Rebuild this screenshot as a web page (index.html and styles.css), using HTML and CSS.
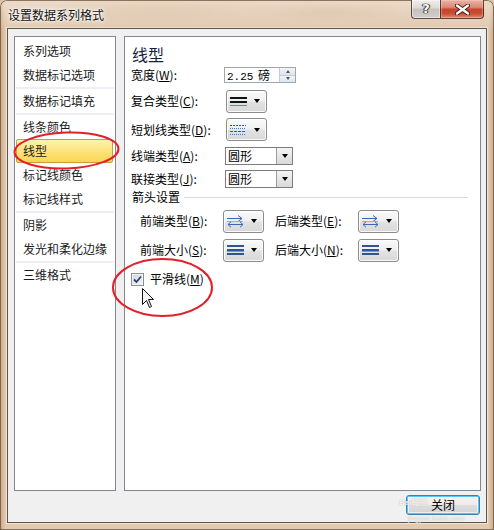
FILE: index.html
```html
<!DOCTYPE html>
<html>
<head>
<meta charset="utf-8">
<title>设置数据系列格式</title>
<link rel="stylesheet" href="styles.css">
</head>
<body>
<div class="window">
  <div class="titlebar">
    <div class="title">设置数据系列格式</div>
    <div class="caps">
      <div class="cap help">?</div>
      <div class="cap close">
        <svg width="15" height="11" viewBox="0 0 15 11"><path d="M2 1.5 L13 9.5 M13 1.5 L2 9.5" stroke="#3a1a14" stroke-width="4.2" stroke-linecap="round"/><path d="M2 1.5 L13 9.5 M13 1.5 L2 9.5" stroke="#ffffff" stroke-width="2.4" stroke-linecap="round"/></svg>
      </div>
    </div>
  </div>
  <div class="client">
    <div class="panels">
      <div class="nav">
        <div class="item">系列选项</div>
        <div class="item">数据标记选项</div>
        <div class="sep"></div>
        <div class="item">数据标记填充</div>
        <div class="sep"></div>
        <div class="item">线条颜色</div>
        <div class="item selected">线型</div>
        <div class="item">标记线颜色</div>
        <div class="item">标记线样式</div>
        <div class="sep"></div>
        <div class="item">阴影</div>
        <div class="item">发光和柔化边缘</div>
        <div class="sep"></div>
        <div class="item">三维格式</div>
      </div>
      <div class="content">
        <div class="heading">线型</div>
        <div class="row r1">
          <div class="lbl">宽度(<u>W</u>):</div>
          <div class="spin">
            <div class="val"><span class="num">2.25</span> 磅</div>
            <div class="arrows">
              <div class="up"><span class="tri-up"></span></div>
              <div class="down"><span class="tri-down"></span></div>
            </div>
          </div>
        </div>
        <div class="row r2">
          <div class="lbl">复合类型(<u>C</u>):</div>
          <div class="ddbtn">
            <svg class="ico" width="17" height="11" viewBox="0 0 17 11"><rect x="0" y="1" width="17" height="2" fill="#111"/><rect x="0" y="5" width="17" height="2" fill="#111"/><rect x="0" y="9" width="17" height="1" fill="#6c8c7c"/></svg>
            <span class="caret"></span>
          </div>
        </div>
        <div class="row r3">
          <div class="lbl">短划线类型(<u>D</u>):</div>
          <div class="ddbtn">
            <svg class="ico" width="17" height="11" viewBox="0 0 17 11"><path d="M0 1.5 H16" stroke="#2b58b0" stroke-width="1" stroke-dasharray="2 1"/><path d="M0 4.5 H16" stroke="#4a74c4" stroke-width="1" stroke-dasharray="1 1"/><path d="M0 7.5 H16" stroke="#2b58b0" stroke-width="1" stroke-dasharray="3 1"/><path d="M0 10.5 H16" stroke="#4a74c4" stroke-width="1" stroke-dasharray="1 1"/></svg>
            <span class="caret"></span>
          </div>
        </div>
        <div class="row r4">
          <div class="lbl">线端类型(<u>A</u>):</div>
          <div class="sel"><div class="txt">圆形</div><div class="sbtn"><span class="caret"></span></div></div>
        </div>
        <div class="row r5">
          <div class="lbl">联接类型(<u>J</u>):</div>
          <div class="sel"><div class="txt">圆形</div><div class="sbtn"><span class="caret"></span></div></div>
        </div>
        <div class="section">
          <div class="sect-lbl">箭头设置</div>
          <div class="line"></div>
        </div>
        <div class="row arow r6">
          <div class="alabel">前端类型(<u>B</u>):</div>
          <div class="ddbtn abtn">
            <svg class="ico" width="17" height="13" viewBox="0 0 17 13"><path d="M0 3.5 H15 M11 0.5 L15 3.5 L11 6.5" stroke="#3868b8" stroke-width="1" fill="none"/><path d="M0 6.5 H16" stroke="#9ab0d0" stroke-width="1"/><path d="M1 9.5 H16 M4 6.8 L1 9.5 L4 12.2 M13 6.8 L16 9.5 L13 12.2" stroke="#3868b8" stroke-width="1" fill="none"/></svg>
            <span class="caret"></span>
          </div>
          <div class="alabel second">后端类型(<u>E</u>):</div>
          <div class="ddbtn abtn">
            <svg class="ico" width="17" height="13" viewBox="0 0 17 13"><path d="M0 3.5 H15 M11 0.5 L15 3.5 L11 6.5" stroke="#3868b8" stroke-width="1" fill="none"/><path d="M0 6.5 H16" stroke="#9ab0d0" stroke-width="1"/><path d="M1 9.5 H16 M4 6.8 L1 9.5 L4 12.2 M13 6.8 L16 9.5 L13 12.2" stroke="#3868b8" stroke-width="1" fill="none"/></svg>
            <span class="caret"></span>
          </div>
        </div>
        <div class="row arow r7">
          <div class="alabel">前端大小(<u>S</u>):</div>
          <div class="ddbtn abtn">
            <svg class="ico" width="17" height="10" viewBox="0 0 17 10"><rect x="0" y="0" width="17" height="2" fill="#2f5597"/><rect x="0" y="4" width="17" height="2.5" fill="#2f5597"/><rect x="0" y="8" width="17" height="2" fill="#2f5597"/></svg>
            <span class="caret"></span>
          </div>
          <div class="alabel second">后端大小(<u>N</u>):</div>
          <div class="ddbtn abtn">
            <svg class="ico" width="17" height="10" viewBox="0 0 17 10"><rect x="0" y="0" width="17" height="2" fill="#2f5597"/><rect x="0" y="4" width="17" height="2.5" fill="#2f5597"/><rect x="0" y="8" width="17" height="2" fill="#2f5597"/></svg>
            <span class="caret"></span>
          </div>
        </div>
        <div class="row r8">
          <div class="chk">
            <svg width="11" height="11" viewBox="0 0 11 11"><path d="M2 5.5 L4.5 8 L9 2.5" stroke="#2d4373" stroke-width="1.8" fill="none"/></svg>
          </div>
          <div class="chk-lbl">平滑线(<u>M</u>)</div>
        </div>
      </div>
    </div>
    <div class="footer">
      <div class="btn-close">关闭</div>
    </div>
  </div>
  <div class="wm1">Bai经验</div>
  <div class="wm2">jingyan.baidu.com</div>
  <svg class="overlay" width="494" height="530" viewBox="0 0 494 530">
    <ellipse cx="66.5" cy="150.5" rx="52" ry="18" transform="rotate(-2 66.5 150.5)" fill="none" stroke="#e2202a" stroke-width="2"/>
    <ellipse cx="162.5" cy="287.5" rx="49.5" ry="28.5" fill="none" stroke="#e2202a" stroke-width="2"/>
    <path d="M142.5 288.5 L142.5 304.5 L146.5 300.5 L149.5 307.5 L151.5 306.5 L148.5 299.5 L153.5 299.5 Z" fill="#f4f4f4" stroke="#111" stroke-width="1" stroke-linejoin="miter"/>
  </svg>
</div>
</body>
</html>
```
FILE: styles.css
```css
* { box-sizing: border-box; }
html, body { margin: 0; padding: 0; }
body {
  width: 494px;
  height: 530px;
  overflow: hidden;
  font-family: "Noto Sans CJK SC", "Microsoft YaHei", sans-serif;
  font-size: 12px;
  color: #000;
  background: #dcc3a8;
}
u { text-decoration: underline; text-underline-offset: 1px; }

.window {
  position: relative;
  width: 494px;
  height: 530px;
  display: flex;
  flex-direction: column;
  border-radius: 7px 7px 0 0;
  background:
    radial-gradient(ellipse 120px 14px at 160px 8px, rgba(190,150,110,.35), transparent),
    radial-gradient(ellipse 90px 12px at 330px 10px, rgba(180,140,100,.3), transparent),
    linear-gradient(90deg, #c9a583 0px, #e2c9b0 5px, #e2c9b0 489px, #c9a583 494px);
  box-shadow: inset 0 0 0 1px rgba(70, 50, 30, .55);
}
.window::before {
  content: "";
  position: absolute;
  left: 1px; right: 1px; top: 1px; height: 27px;
  border-radius: 6px 6px 0 0;
  background: linear-gradient(180deg, rgba(240,228,214,.65), rgba(226,205,184,.2));
  pointer-events: none;
}

.titlebar {
  position: relative;
  height: 28px;
  display: flex;
  justify-content: space-between;
  align-items: flex-start;
  padding: 0 10px 0 8px;
}
.title {
  margin-top: 7px;
  line-height: 16px;
  font-size: 12px;
  color: #101010;
  text-shadow: 0 0 6px #fff, 0 0 3px #fff, 0 0 2px rgba(255,255,255,.9);
}
.caps { display: flex; }
.cap {
  height: 19px;
  display: flex;
  align-items: center;
  justify-content: center;
  border: 1px solid rgba(40, 30, 25, .75);
  border-top: none;
}
.help {
  width: 29px;
  border-right: none;
  border-radius: 0 0 0 4px;
  background: linear-gradient(180deg, #f1ede9 0%, #dedad6 45%, #c6c1bc 50%, #d2cdc8 100%);
  box-shadow: inset 0 0 0 1px rgba(255,255,255,.45);
  color: #fff;
  font-family: "DejaVu Sans", sans-serif;
  font-weight: bold;
  font-size: 13px;
  line-height: 18px;
  text-shadow: 0 0 1px #222, 0 0 1px #222, 1px 0 1px #333, -1px 0 1px #333;
}
.close {
  width: 44px;
  border-radius: 0 0 4px 0;
  background: linear-gradient(180deg, #eab3a5 0%, #dc8a74 40%, #c8452d 52%, #c94c33 75%, #e08b6e 100%);
  box-shadow: inset 0 0 0 1px rgba(255,220,210,.35);
}

.client {
  margin: 0 7px;
  height: 495px;
  border: 1px solid #5a5550;
  background: #f0f0f0;
  padding: 7px 5px 7px 6px;
  display: flex;
  flex-direction: column;
  box-shadow: 0 0 0 1px rgba(255, 248, 240, .55);
}
.panels {
  height: 455px;
  display: flex;
  gap: 8px;
}

.nav {
  width: 102px;
  height: 100%;
  border: 1px solid #828790;
  background: #fff;
  padding-top: 2px;
}
.item {
  height: 24px;
  line-height: 24px;
  padding-left: 8px;
  color: #1b1b1b;
  white-space: nowrap;
}
.item.selected {
  margin: 0 2px 0 1px;
  padding-left: 6px;
  line-height: 22px;
  border: 1px solid #c99d3a;
  border-radius: 2px;
  background: linear-gradient(180deg, #fff3b4 0%, #fde685 40%, #fbd653 100%);
}
.sep {
  height: 2px;
  margin: 0 1px;
  background: #eeeef4;
}

.content {
  flex: 1;
  height: 100%;
  border: 1px solid #828790;
  background: #fff;
  padding: 7px 6px 0 6px;
}
.heading {
  height: 20px;
  line-height: 20px;
  font-size: 16px;
  padding-left: 1px;
  color: #15243c;
}
.row { display: flex; align-items: center; }
.r1 { height: 22px; }
.r2 { height: 30px; }
.r3 { height: 27px; }
.r4 { height: 26px; }
.r5 { height: 20px; }
.r6 { height: 32px; }
.r7 { height: 26px; }
.r8 { height: 32px; }

.lbl {
  width: 94px;
  line-height: 14px;
  white-space: nowrap;
}

.spin {
  margin-left: -1px;
  width: 72px;
  height: 16px;
  border: 1px solid #a0a6ae;
  background: #fff;
  display: flex;
}
.spin .val {
  flex: 1;
  padding-left: 2px;
  line-height: 14px;
  white-space: nowrap;
}
.num { font-family: "Liberation Mono", monospace; font-size: 11px; margin-right: 2px; }
.arrows {
  width: 16px;
  display: flex;
  flex-direction: column;
  border-left: 1px solid #c4ccd6;
}
.arrows .up, .arrows .down {
  flex: 1;
  display: flex;
  align-items: center;
  justify-content: center;
  background: linear-gradient(180deg, #f3f6fa, #dde4ec);
}
.arrows .up { border-bottom: 1px solid #c4ccd6; }
.tri-up {
  width: 0; height: 0;
  border-left: 2.5px solid transparent;
  border-right: 2.5px solid transparent;
  border-bottom: 3px solid #555;
}
.tri-down {
  width: 0; height: 0;
  border-left: 2.5px solid transparent;
  border-right: 2.5px solid transparent;
  border-top: 3px solid #555;
}

.ddbtn {
  margin-left: 1px;
  width: 41px;
  height: 23px;
  border: 1px solid #8c8c8c;
  border-radius: 3px;
  background: linear-gradient(180deg, #fbfbfb 0%, #efefef 48%, #e2e2e2 52%, #d8d8d8 100%);
  box-shadow: inset 0 0 0 1px rgba(255,255,255,.85);
  display: flex;
  align-items: center;
  padding-left: 3px;
}
.ddbtn .ico { display: block; flex: none; }
.caret {
  display: block;
  width: 0; height: 0;
  border-left: 3.5px solid transparent;
  border-right: 3.5px solid transparent;
  border-top: 4px solid #000;
}
.ddbtn .caret { margin-left: 7px; }

.sel {
  width: 68px;
  height: 18px;
  border: 1px solid #7c7c7c;
  background: #fff;
  display: flex;
}
.sel .txt { flex: 1; padding-left: 2px; line-height: 16px; }
.sbtn {
  width: 16px;
  border-left: 1px solid #9c9c9c;
  background: linear-gradient(180deg, #f4f4f4, #d9d9d9);
  display: flex;
  align-items: center;
  justify-content: center;
}

.section {
  height: 16px;
  display: flex;
  align-items: center;
  padding-left: 1px;
}
.sect-lbl { line-height: 14px; }
.section .line {
  flex: 1;
  height: 1px;
  margin: 1px 6px 0 4px;
  background: #d4dde6;
}

.arow { padding-left: 9px; }
.alabel { width: 83px; line-height: 14px; white-space: nowrap; }
.alabel.second { margin-left: 11px; }
.abtn { margin-left: 0; }

.chk {
  width: 13px;
  height: 13px;
  border: 1px solid #8e8f8f;
  background: linear-gradient(135deg, #cdd3da, #f7f8f9);
  box-shadow: inset 0 0 0 1px #f4f4f4;
  display: flex;
  align-items: center;
  justify-content: center;
}
.chk svg { display: block; }
.chk-lbl { margin-left: 6px; line-height: 14px; }

.footer {
  margin-top: 4px;
  display: flex;
  justify-content: flex-end;
}
.btn-close {
  margin-right: 1px;
  width: 74px;
  height: 20px;
  border: 1px solid #3c7fb1;
  border-radius: 3px;
  background: linear-gradient(180deg, #f4f4f4 0%, #ececec 48%, #dedede 52%, #d2d2d2 100%);
  box-shadow: inset 0 0 0 1px #52c8f5, inset 0 0 0 2px rgba(255,255,255,.6);
  text-align: center;
  line-height: 18px;
  color: #000;
}

.wm1, .wm2 {
  position: absolute;
  color: rgba(255, 255, 255, .85);
  text-shadow: 0 0 1px rgba(110, 110, 110, .55);
  font-family: "Liberation Sans", "Noto Sans CJK SC", sans-serif;
  pointer-events: none;
  white-space: nowrap;
}
.wm1 { left: 399px; top: 498px; font-size: 8px; line-height: 9px; font-weight: bold; }
.wm2 { left: 408px; top: 515px; font-size: 7px; line-height: 7px; }

.overlay {
  position: absolute;
  left: 0;
  top: 0;
  pointer-events: none;
}
```
